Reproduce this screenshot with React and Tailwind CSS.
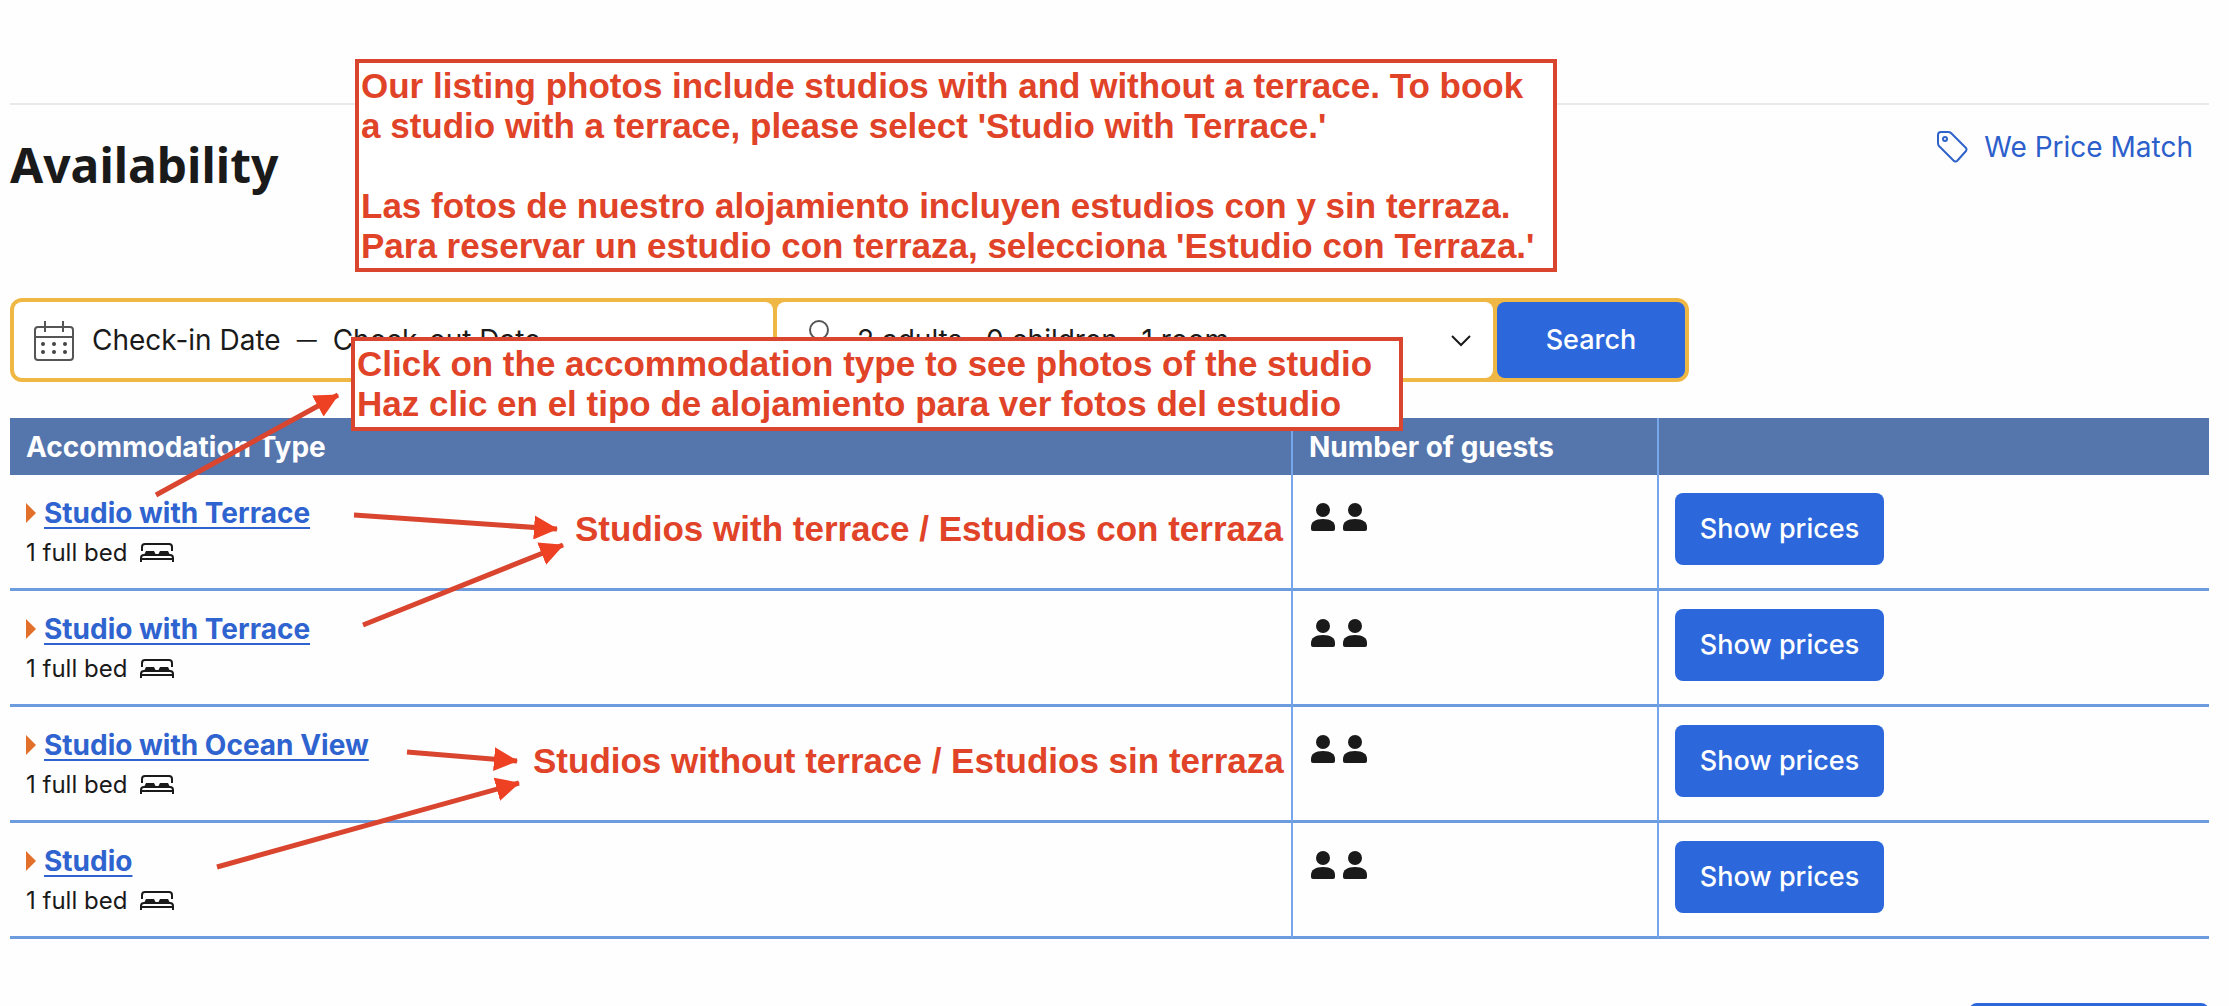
const rooms = [
  { name: "Studio with Terrace" },
  { name: "Studio with Terrace" },
  { name: "Studio with Ocean View" },
  { name: "Studio" },
];

const arrows = [
  [156, 495, 338, 395],
  [354, 515, 557, 529],
  [363, 625, 563, 545],
  [407, 752, 517, 761],
  [217, 867, 519, 783],
];

function CalendarIcon() {
  return (
    <svg className="h-11 w-11 shrink-0" viewBox="0 0 44 44" fill="none" stroke="#555" strokeWidth="2" aria-hidden="true">
      <rect x="3" y="9" width="38" height="33" rx="3" />
      <path d="M3 19h38M13 3v11M31 3v11" />
      <g fill="#444" stroke="none">
        <circle cx="11" cy="26" r="2" />
        <circle cx="22" cy="26" r="2" />
        <circle cx="33" cy="26" r="2" />
        <circle cx="11" cy="34" r="2" />
        <circle cx="22" cy="34" r="2" />
        <circle cx="33" cy="34" r="2" />
      </g>
    </svg>
  );
}

function PersonOutlineIcon() {
  return (
    <svg className="h-11 w-11 shrink-0" viewBox="0 0 44 44" fill="none" stroke="#555" strokeWidth="2" aria-hidden="true">
      <circle cx="22" cy="12" r="9" />
      <path d="M7 42v-4a15 13 0 0 1 30 0v4" />
    </svg>
  );
}

function PersonIcon() {
  return (
    <svg className="h-7 w-6" viewBox="0 0 24 28" fill="#1a1a1a" aria-hidden="true">
      <circle cx="12" cy="7" r="7" />
      <path d="M0 26v-2c0-5 4-8 12-8s12 3 12 8v2q0 2-2 2H2q-2 0-2-2z" />
    </svg>
  );
}

function BedIcon() {
  return (
    <svg className="h-5 w-9" viewBox="0 0 36 20" fill="none" stroke="#1a1a1a" strokeWidth="2" aria-hidden="true">
      <path d="M3 8V4q0-3 3-3h24q3 0 3 3v4" />
      <path d="M2 19v-4q0-3 3-3h26q3 0 3 3v4M2 16h32" />
      <path d="M5 12l2-4h8l2 4zM19 12l2-4h8l2 4z" fill="#1a1a1a" stroke="none" />
    </svg>
  );
}

function TagIcon() {
  return (
    <svg className="h-8 w-8" viewBox="0 0 32 32" fill="none" stroke="#2f63c9" strokeWidth="2" strokeLinejoin="round" aria-hidden="true">
      <path d="M2 4q0-3 3-3h7q2 0 3 1l15 15q1 1 0 3L21 30q-1 1-3 0L3 15q-1-1-1-3z" />
      <circle cx="9" cy="8" r="2" />
    </svg>
  );
}

function Arrows() {
  return (
    <svg className="pointer-events-none absolute top-0 left-0 h-[1006px] w-[700px]" viewBox="0 0 700 1006" aria-hidden="true">
      <defs>
        <marker id="head" markerUnits="userSpaceOnUse" markerWidth="24" markerHeight="24" refX="23" refY="12" orient="auto">
          <path d="M0 0L24 12L0 24z" fill="#ee4023" />
        </marker>
      </defs>
      {arrows.map(([x1, y1, x2, y2]) => (
        <path key={x1} d={`M${x1} ${y1}L${x2} ${y2}`} stroke="#d9452e" strokeWidth="5" markerEnd="url(#head)" />
      ))}
    </svg>
  );
}

const noteText = "font-['Liberation_Sans',sans-serif] text-[35px] font-bold text-[#e04328]";
const noteBox = "absolute z-10 border-4 border-[#d9452e] bg-white";

export default function App() {
  return (
    <div className="relative h-screen overflow-hidden bg-[#fefefe] pr-5 pl-[10px] font-[Inter,sans-serif] text-[28px] text-[#1a1a1a]">
      <header className="mt-[103px] flex items-start justify-between border-t-2 border-[#e9e9e9]">
        <h1 className="pt-7 pb-1 font-['Noto_Sans',sans-serif] text-[48px] leading-[64px] font-bold">Availability</h1>
        <a href="#price-match" className="mt-6 mr-4 flex items-center gap-4 leading-9 text-[#2c5fcb]">
          <TagIcon />
          We Price Match
        </a>
      </header>

      <form className="mt-[97px] flex w-[1679px] max-w-full gap-1 rounded-xl bg-[#efb743] p-1" onSubmit={(e) => e.preventDefault()}>
        <button type="button" className="flex h-[76px] w-[759px] items-center gap-4 rounded-lg bg-white pl-[18px] whitespace-nowrap">
          <CalendarIcon />
          <span>Check-in Date</span>
          <span className="text-xl">—</span>
          <span>Check-out Date</span>
        </button>
        <button type="button" className="flex h-[76px] flex-1 items-center gap-4 rounded-lg bg-white pr-5 pl-5 whitespace-nowrap">
          <PersonOutlineIcon />
          <span className="flex-1 text-left">2 adults · 0 children · 1 room</span>
          <svg className="h-6 w-6" viewBox="0 0 24 24" fill="none" stroke="#1a1a1a" strokeWidth="2" aria-hidden="true">
            <path d="M3 8l9 9 9-9" />
          </svg>
        </button>
        <button type="submit" className="h-[76px] w-[188px] rounded-lg bg-[#2c68dc] text-[27px] font-medium text-white">Search</button>
      </form>

      <table className="mt-9 w-full table-fixed border-separate border-spacing-0 text-left">
        <colgroup>
          <col className="w-[1283px]" />
          <col className="w-[366px]" />
          <col />
        </colgroup>
        <thead>
          <tr className="bg-[#5575ad] text-white">
            <th className="h-[57px] border-r-2 border-[#77a6ea] pl-4 leading-10 font-bold">Accommodation Type</th>
            <th className="border-r-2 border-[#77a6ea] pl-4 leading-10 font-bold">Number of guests</th>
            <th aria-label="Prices" />
          </tr>
        </thead>
        <tbody>
          {rooms.map((room, i) => (
            <tr key={i} className="align-top">
              <td className="h-[116px] border-r-2 border-b-3 border-r-[#77a6ea] border-b-[#6d9cde] pt-[18px] pl-4">
                <div className="flex items-center gap-2 leading-10">
                  <svg className="h-5 w-[10px]" viewBox="0 0 10 20" fill="#e2702a" aria-hidden="true">
                    <path d="M0 0l10 10L0 20z" />
                  </svg>
                  <a href="#room" className="font-bold text-[#2f63cf] underline decoration-2 underline-offset-4">{room.name}</a>
                </div>
                <div className="flex items-center gap-3 text-2xl leading-10">
                  1 full bed
                  <BedIcon />
                </div>
              </td>
              <td className="border-r-2 border-b-3 border-r-[#77a6ea] border-b-[#6d9cde] pt-7 pl-[18px]">
                <div className="flex gap-2">
                  <PersonIcon />
                  <PersonIcon />
                </div>
              </td>
              <td className="border-b-3 border-[#6d9cde] pt-[18px] pl-4">
                <button type="button" className="block h-[72px] w-[209px] rounded-lg bg-[#2c68dc] text-[27px] font-medium text-white">Show prices</button>
              </td>
            </tr>
          ))}
        </tbody>
      </table>

      <div className="mt-16 flex justify-end">
        <button type="button" aria-label="Reserve" className="h-[72px] w-[240px] rounded-lg bg-[#2c68dc]" />
      </div>

      <div className={`${noteBox} ${noteText} top-[59px] left-[355px] h-[213px] w-[1202px] pt-[3px] pl-[2px] leading-10 whitespace-nowrap`}>
        <p>Our listing photos include studios with and without a terrace. To book<br />a studio with a terrace, please select 'Studio with Terrace.'</p>
        <p className="mt-10">Las fotos de nuestro alojamiento incluyen estudios con y sin terraza.<br />Para reservar un estudio con terraza, selecciona 'Estudio con Terraza.'</p>
      </div>
      <div className={`${noteBox} ${noteText} top-[337px] left-[351px] h-[94px] w-[1052px] pt-[3px] pl-[2px] leading-10 whitespace-nowrap`}>
        <p>Click on the accommodation type to see photos of the studio<br />Haz clic en el tipo de alojamiento para ver fotos del estudio</p>
      </div>
      <p className={`${noteText} absolute top-[509px] left-[575px] leading-10 whitespace-nowrap`}>Studios with terrace / Estudios con terraza</p>
      <p className={`${noteText} absolute top-[741px] left-[533px] leading-10 whitespace-nowrap`}>Studios without terrace / Estudios sin terraza</p>
      <Arrows />
    </div>
  );
}
